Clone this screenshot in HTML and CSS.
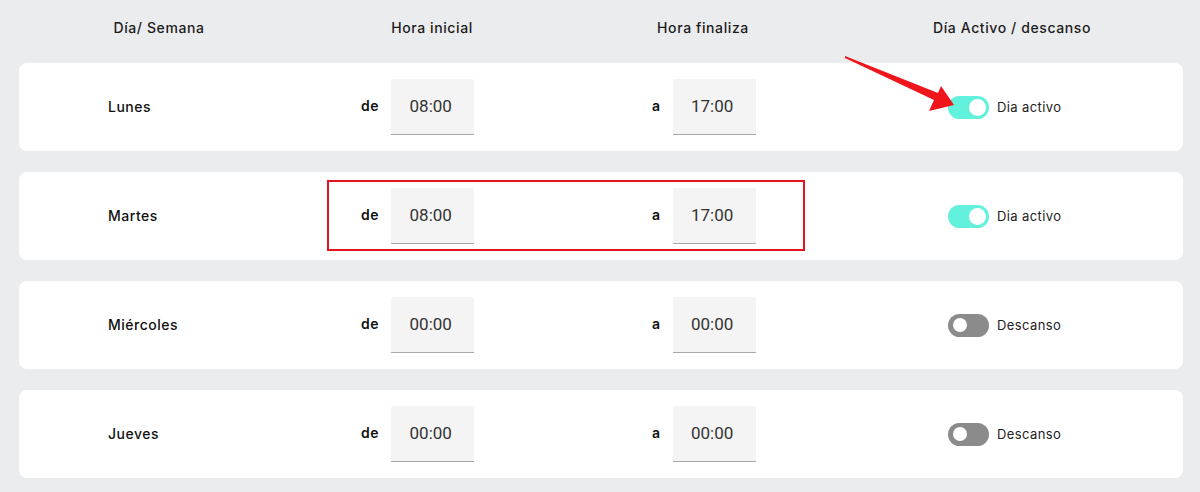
FILE: index.html
```html
<!DOCTYPE html>
<html lang="es">
<head>
<meta charset="utf-8">
<title>Horario</title>
<link rel="stylesheet" href="styles.css">
</head>
<body>
<div class="page">
  <div class="header grid">
    <div class="hcell">Día/ Semana</div>
    <div class="hcell">Hora inicial</div>
    <div class="hcell">Hora finaliza</div>
    <div class="hcell">Día Activo / descanso</div>
  </div>
  <div class="rows">
    <div class="card grid">
      <div class="day">Lunes</div>
      <div class="start"><span class="lbl">de</span><span class="time">08:00</span></div>
      <div class="end"><span class="lbl">a</span><span class="time">17:00</span></div>
      <div class="state"><span class="toggle on"><span class="knob"></span></span><span class="stext">Dia activo</span></div>
    </div>
    <div class="card grid">
      <div class="day">Martes</div>
      <div class="start"><span class="lbl">de</span><span class="time">08:00</span></div>
      <div class="end"><span class="lbl">a</span><span class="time">17:00</span></div>
      <div class="state"><span class="toggle on"><span class="knob"></span></span><span class="stext">Dia activo</span></div>
    </div>
    <div class="card grid">
      <div class="day">Miércoles</div>
      <div class="start"><span class="lbl">de</span><span class="time">00:00</span></div>
      <div class="end"><span class="lbl">a</span><span class="time">00:00</span></div>
      <div class="state"><span class="toggle off"><span class="knob"></span></span><span class="stext">Descanso</span></div>
    </div>
    <div class="card grid">
      <div class="day">Jueves</div>
      <div class="start"><span class="lbl">de</span><span class="time">00:00</span></div>
      <div class="end"><span class="lbl">a</span><span class="time">00:00</span></div>
      <div class="state"><span class="toggle off"><span class="knob"></span></span><span class="stext">Descanso</span></div>
    </div>
  </div>
  <div class="highlight"></div>
  <svg class="arrow" width="120" height="65" viewBox="0 0 120 65">
    <polygon points="5,6 98,43 101,36 114,55 89,61 94,50 5,8" fill="#f0141b"/>
  </svg>
</div>
</body>
</html>
```
FILE: styles.css
```css
html, body {
  margin: 0;
  padding: 0;
  background: #ebecee;
}
body {
  font-family: Inter, "Noto Sans", "DejaVu Sans", sans-serif;
  color: #1a1a1a;
}
.page {
  position: relative;
  width: 1200px;
  height: 492px;
  overflow: hidden;
}
.grid {
  display: grid;
  grid-template-columns: 280px 266px 276px 1fr;
  width: 1164px;
  margin-left: 19px;
}
.header {
  height: 54px;
  align-items: center;
}
.hcell {
  text-align: center;
  font-size: 14px;
  font-weight: 500;
  letter-spacing: 0.6px;
  color: #1c1c1c;
}
.rows {
  display: flex;
  flex-direction: column;
  gap: 21px;
  margin-top: 9px;
}
.card {
  background: #ffffff;
  border-radius: 8px;
  height: 88px;
  align-items: center;
}
.day {
  padding-left: 89px;
  font-size: 14px;
  font-weight: 500;
  letter-spacing: 0.5px;
  color: #111;
  margin-top: -2px;
}
.start, .end {
  display: flex;
  align-items: center;
  gap: 12px;
}
.start { padding-left: 62px; }
.end { padding-left: 87px; }
.lbl {
  font-size: 14px;
  font-weight: 600;
  letter-spacing: 0.6px;
  color: #111;
  margin-top: -3px;
}
.time {
  box-sizing: border-box;
  width: 83px;
  height: 56px;
  background: #f4f4f4;
  border-bottom: 1px solid #a8a8a8;
  border-radius: 2px 2px 0 0;
  display: flex;
  align-items: center;
  justify-content: center;
  padding-right: 4px;
  padding-bottom: 2px;
  font-family: Roboto, "Liberation Sans", sans-serif;
  font-size: 17px;
  color: #333;
}
.state {
  display: flex;
  align-items: center;
  gap: 8px;
  padding-left: 107px;
}
.toggle {
  position: relative;
  width: 41px;
  height: 23px;
  border-radius: 12px;
  display: flex;
  align-items: center;
  padding: 0 3px;
  box-sizing: border-box;
}
.toggle.on {
  background: #61f1dc;
  justify-content: flex-end;
}
.toggle.off {
  background: #8b8b8b;
  justify-content: flex-start;
  padding-left: 5px;
}
.knob {
  width: 17px;
  height: 17px;
  border-radius: 50%;
  background: #fff;
}
.toggle.off .knob {
  width: 14px;
  height: 14px;
}
.stext {
  font-size: 13px;
  letter-spacing: 0.4px;
  color: #222;
}
.highlight {
  position: absolute;
  left: 327px;
  top: 180px;
  width: 474px;
  height: 67px;
  border: 2px solid #e3141d;
}
.arrow {
  position: absolute;
  left: 840px;
  top: 50px;
}
```
